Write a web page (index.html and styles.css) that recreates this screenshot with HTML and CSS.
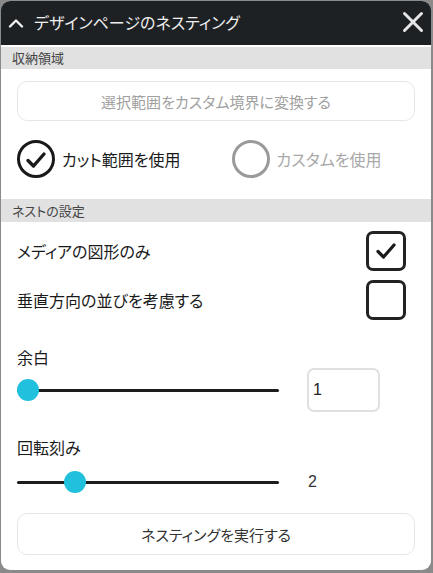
FILE: index.html
```html
<!DOCTYPE html>
<html lang="ja">
<head>
<meta charset="utf-8">
<link rel="stylesheet" href="styles.css">
</head>
<body>
<div class="window">
  <div class="titlebar">
    <svg class="chev" width="16" height="10" viewBox="0 0 16 10"><path d="M2 8.5 L8 2.5 L14 8.5" fill="none" stroke="#f0f0f0" stroke-width="2.4" stroke-linecap="round" stroke-linejoin="round"/></svg>
    <span class="title">デザインページのネスティング</span>
    <svg class="close" width="22" height="22" viewBox="0 0 22 22"><path d="M2.5 2.5 L19.5 19.5 M19.5 2.5 L2.5 19.5" stroke="#e6e6e6" stroke-width="3" stroke-linecap="round"/></svg>
  </div>
  <div class="section-head first">収納領域</div>
  <div class="content">
    <div class="btn disabled">選択範囲をカスタム境界に変換する</div>
    <div class="radios">
      <div class="radio-item">
        <span class="radio on"><svg width="22" height="18" viewBox="0 0 22 18"><path d="M3 9.5 L8.5 15 L19 3" fill="none" stroke="#1a1a1a" stroke-width="3.4" stroke-linecap="round" stroke-linejoin="round"/></svg></span>
        <span class="radio-label">カット範囲を使用</span>
      </div>
      <div class="radio-item second">
        <span class="radio off"></span>
        <span class="radio-label muted">カスタムを使用</span>
      </div>
    </div>
  </div>
  <div class="section-head">ネストの設定</div>
  <div class="content">
    <div class="check-row">
      <span class="check-label">メディアの図形のみ</span>
      <span class="checkbox"><svg width="22" height="18" viewBox="0 0 22 18"><path d="M3 9.5 L8.5 15 L19 3" fill="none" stroke="#1a1a1a" stroke-width="3.2" stroke-linecap="round" stroke-linejoin="round"/></svg></span>
    </div>
    <div class="check-row second">
      <span class="check-label">垂直方向の並びを考慮する</span>
      <span class="checkbox"></span>
    </div>
    <div class="field-label margin">余白</div>
    <div class="slider-row">
      <div class="slider"><div class="track"></div><div class="thumb" style="left:0px"></div></div>
      <div class="num-input">1</div>
    </div>
    <div class="field-label rot">回転刻み</div>
    <div class="slider-row">
      <div class="slider"><div class="track"></div><div class="thumb" style="left:47px"></div></div>
      <div class="num-value">2</div>
    </div>
    <div class="btn run">ネスティングを実行する</div>
  </div>
</div>
</body>
</html>
```

FILE: styles.css
```css
* { box-sizing: border-box; }
html, body { margin: 0; padding: 0; }
body {
  background: #8a8a8a;
  width: 433px;
  height: 573px;
  overflow: hidden;
  font-family: "Noto Sans CJK JP", "Noto Sans", sans-serif;
  font-feature-settings: "palt";
}
.window {
  margin: 1px 2px 0 1px;
  width: 430px;
  height: 569px;
  background: #ffffff;
  border-radius: 9px;
  overflow: hidden;
  display: flex;
  flex-direction: column;
}
.titlebar {
  height: 44px;
  background: #1e2124;
  display: flex;
  align-items: center;
  padding: 0 8px 0 7px;
  flex-shrink: 0;
}
.chev { display: block; margin-top: -1px; }
.title {
  color: #eeeeee;
  font-size: 16px;
  margin-left: 10px;
  flex: 1;
  line-height: 20px;
  margin-top: -2px;
}
.close { display: block; margin-right: -1px; margin-top: -2px; }
.section-head {
  height: 23px;
  background: #e1e1e1;
  color: #444;
  font-size: 13px;
  line-height: 23px;
  padding-left: 11px;
  flex-shrink: 0;
}
.section-head.first { margin-top: 2px; height: 22px; line-height: 22px; }
.content {
  padding: 0 16px 0 16px;
  display: flex;
  flex-direction: column;
}
.btn {
  height: 41px;
  border: 1.5px solid #e6e6e6;
  border-radius: 10px;
  display: flex;
  align-items: center;
  justify-content: center;
  font-size: 15px;
  color: #333;
}
.btn.disabled { margin-top: 12px; color: #a0a0a0; height: 40px; }
.radios {
  display: flex;
  align-items: center;
  margin-top: 19px;
  margin-bottom: 21px;
}
.radio-item { display: flex; align-items: center; }
.radio-item.second { margin-left: 51px; }
.radio {
  width: 38px;
  height: 38px;
  border-radius: 50%;
  border: 3px solid #1a1a1a;
  display: flex;
  align-items: center;
  justify-content: center;
}
.radio.off { border-color: #9a9a9a; }
.radio svg { display: block; margin-top: 1px; }
.radio-label { font-size: 16px; color: #1a1a1a; margin-left: 7px; }
.radio-label.muted { color: #a8a8a8; }
.check-row {
  display: flex;
  align-items: center;
  justify-content: space-between;
  margin-top: 9px;
  height: 40px;
}
.check-label { font-size: 16px; color: #1a1a1a; }
.checkbox {
  width: 40px;
  height: 40px;
  border: 3px solid #222;
  border-radius: 7px;
  display: flex;
  align-items: center;
  justify-content: center;
  margin-right: 9px;
}
.checkbox svg { display: block; }
.field-label {
  font-size: 16px;
  color: #1a1a1a;
  height: 22px;
  line-height: 22px;
}
.field-label.margin { margin-top: 26px; }
.field-label.rot { margin-top: 24px; }
.slider-row {
  display: flex;
  align-items: center;
  height: 44px;
}
.field-label.rot + .slider-row { margin-top: 2px; }
.slider {
  position: relative;
  width: 262px;
  height: 22px;
}
.track {
  position: absolute;
  left: 0; right: 0;
  top: 9.5px;
  height: 3px;
  background: #1c1c1c;
  border-radius: 2px;
}
.thumb {
  position: absolute;
  top: 0;
  width: 22px;
  height: 22px;
  border-radius: 50%;
  background: #21c1dd;
}
.num-input {
  margin-left: 28px;
  width: 73px;
  height: 44px;
  border: 2px solid #e0e0e0;
  border-radius: 7px;
  font-family: "Liberation Sans", "Noto Sans", sans-serif;
  font-size: 16px;
  color: #222;
  display: flex;
  align-items: center;
  padding-left: 4px;
}
.num-value {
  margin-left: 29px;
  font-family: "Liberation Sans", "Noto Sans", sans-serif;
  font-size: 16px;
  color: #333;
}
.btn.run { margin-top: 9px; height: 42px; }
```
